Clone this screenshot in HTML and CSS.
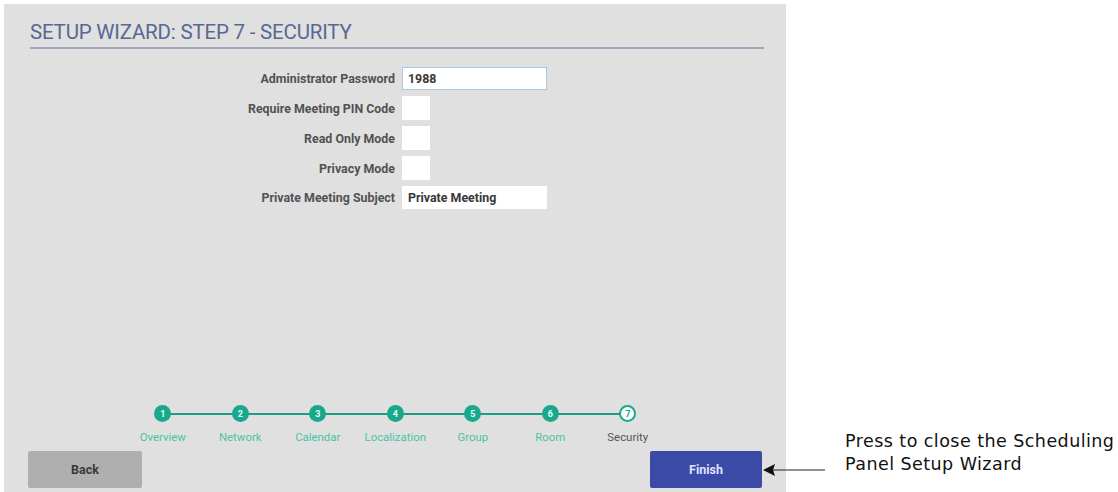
FILE: index.html
```html
<!DOCTYPE html>
<html lang="en">
<head>
  <meta charset="UTF-8" />
  <title>Setup Wizard - Security</title>
  <link rel="stylesheet" href="styles.css">
</head>
<body>

  <div class="panel">
    <h1 class="title">SETUP WIZARD: STEP 7 - SECURITY</h1>

    <div class="form">
      <label class="label">Administrator Password</label>
      <div class="field wide focused">1988</div>

      <label class="label">Require Meeting PIN Code</label>
      <div class="field box"></div>

      <label class="label">Read Only Mode</label>
      <div class="field box"></div>

      <label class="label">Privacy Mode</label>
      <div class="field box"></div>

      <label class="label">Private Meeting Subject</label>
      <div class="field wide">Private Meeting</div>
    </div>

    <div class="footer">
      <ol class="steps">
        <li class="step done"><span class="dot">1</span><span class="name">Overview</span></li>
        <li class="step done"><span class="dot">2</span><span class="name">Network</span></li>
        <li class="step done"><span class="dot">3</span><span class="name">Calendar</span></li>
        <li class="step done"><span class="dot">4</span><span class="name">Localization</span></li>
        <li class="step done"><span class="dot">5</span><span class="name">Group</span></li>
        <li class="step done"><span class="dot">6</span><span class="name">Room</span></li>
        <li class="step current"><span class="dot">7</span><span class="name">Security</span></li>
      </ol>

      <div class="buttons">
        <button class="btn btn-back">Back</button>
        <button class="btn btn-finish">Finish</button>
      </div>
    </div>
  </div>

  <div class="callout">
    <svg class="callout-arrow" viewBox="0 0 62 16" width="62" height="16">
      <line x1="10" y1="8" x2="62" y2="8" stroke="#222" stroke-width="1.2" />
      <polygon points="0,8 12,2 10,8 12,14" fill="#111" />
    </svg>
    <p class="callout-text">Press to close the Scheduling<br>Panel Setup Wizard</p>
  </div>

</body>
</html>
```

FILE: styles.css
```css
* {
  box-sizing: border-box;
}

html, body {
  margin: 0;
  background: #fff;
  font-family: 'Roboto', 'Liberation Sans', sans-serif;
}

body {
  position: relative;
  width: 1118px;
  height: 492px;
  overflow: hidden;
  padding: 4px 0 0 4px;
}

.panel {
  width: 782px;
  height: 488px;
  background: #e0e0e0;
  display: flex;
  flex-direction: column;
  padding: 0 22px 4px 26px;
}

.title {
  margin: 16px 0 0;
  padding: 0 0 3px;
  font-size: 20.5px;
  font-weight: 400;
  line-height: 24px;
  color: #5a6792;
  border-bottom: 2px solid #a3a3bd;
  letter-spacing: -0.2px;
}

/* form: labels right aligned against the inputs */
.form {
  display: grid;
  grid-template-columns: 365px auto;
  column-gap: 7px;
  row-gap: 6px;
  margin-top: 18px;
  align-items: center;
}

.label {
  text-align: right;
  font-size: 12.4px;
  font-weight: 700;
  color: #525252;
}

.field {
  background: #fff;
  height: 23px;
  font-size: 12.4px;
  font-weight: 700;
  color: #383838;
  padding: 0 6px;
  line-height: 23px;
}

.field.wide {
  width: 145px;
}

.field.box {
  width: 28px;
  height: 24px;
}

.field.focused {
  border: 1px solid #a9c8de;
  line-height: 21px;
  padding: 0 5px;
}

.footer {
  margin-top: auto;
}

/* progress stepper */
.steps {
  list-style: none;
  margin: 0 0 0 94px;
  padding: 0;
  width: max-content;
  display: flex;
  position: relative;
}

.steps::before {
  content: '';
  position: absolute;
  left: 39px;
  right: 39px;
  top: 8px;
  height: 2px;
  background: #1c9e86;
}

.step {
  width: 77.5px;
  display: flex;
  flex-direction: column;
  align-items: center;
  position: relative;
}

.dot {
  width: 17px;
  height: 17px;
  border-radius: 50%;
  background: #1aa88c;
  color: #e8fff8;
  font-size: 9px;
  font-weight: 700;
  display: flex;
  align-items: center;
  justify-content: center;
}

.step.current .dot {
  background: #fff;
  border: 2px solid #1aa88c;
  color: #1aa88c;
}

.name {
  margin-top: 8px;
  font-size: 11.4px;
  color: #4cc3a6;
}

.step.current .name {
  color: #555;
}

.buttons {
  display: flex;
  justify-content: space-between;
  margin: 7px 2px 0 -2px;
}

.btn {
  height: 37px;
  border: none;
  border-radius: 2px;
  font-family: 'Roboto', sans-serif;
  font-size: 12.5px;
  font-weight: 700;
}

.btn-back {
  width: 114px;
  background: #afafaf;
  color: #3a3a3a;
}

.btn-finish {
  width: 112px;
  background: #3b4aa6;
  color: #dfe3ff;
}

/* annotation to the right of the panel */
.callout {
  position: absolute;
  left: 763px;
  top: 430px;
  display: flex;
  align-items: flex-end;
}

.callout-arrow {
  display: block;
  margin-bottom: -2px;
}

.callout-text {
  margin: 0 0 0 20px;
  font-family: 'DejaVu Sans', sans-serif;
  font-size: 17.5px;
  line-height: 23px;
  letter-spacing: 0.45px;
  color: #111;
}
```
